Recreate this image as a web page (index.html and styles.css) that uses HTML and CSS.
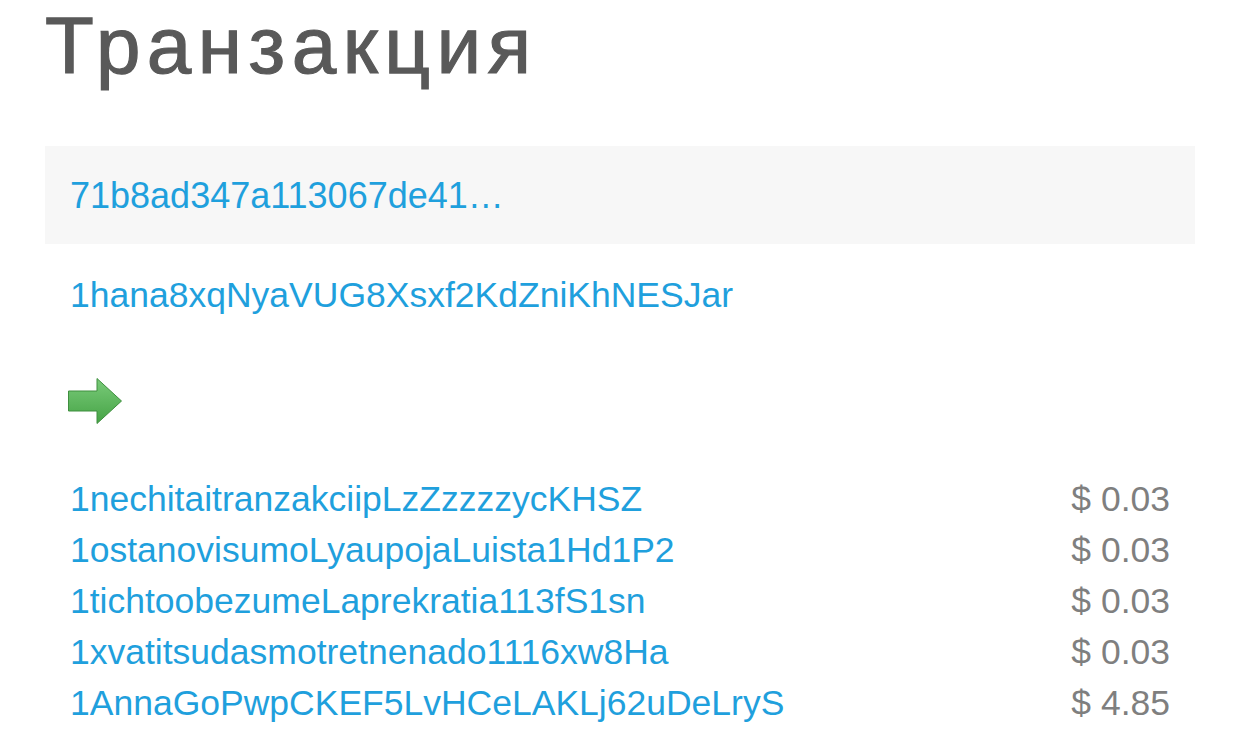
FILE: index.html
```html
<!DOCTYPE html>
<html lang="ru">
<head>
    <meta charset="UTF-8">
    <title>Транзакция</title>
    <link rel="stylesheet" href="styles.css">
</head>
<body>
<div id="main">
    <h1 class="title">Транзакция</h1>

    <div class="tx-hash">
        <a href="#">71b8ad347a113067de41…</a>
    </div>

    <div class="tx-from">
        <a href="#">1hana8xqNyaVUG8Xsxf2KdZniKhNESJar</a>
    </div>

    <div class="tx-arrow">
        <svg width="54" height="46" viewBox="0 0 54 46">
            <defs>
                <linearGradient id="arrowFill" x1="0" y1="0" x2="0" y2="1">
                    <stop offset="0" stop-color="#7acb7a"/>
                    <stop offset="1" stop-color="#45a345"/>
                </linearGradient>
            </defs>
            <path d="M0.5 13 H29 V0.5 L53.5 23 L29 45.5 V33 H0.5 Z" fill="url(#arrowFill)" stroke="#3f8f3f" stroke-width="1" stroke-linejoin="miter"/>
        </svg>
    </div>

    <ul class="tx-outputs">
        <li><a href="#">1nechitaitranzakciipLzZzzzzycKHSZ</a><span class="amount">$ 0.03</span></li>
        <li><a href="#">1ostanovisumoLyaupojaLuista1Hd1P2</a><span class="amount">$ 0.03</span></li>
        <li><a href="#">1tichtoobezumeLaprekratia113fS1sn</a><span class="amount">$ 0.03</span></li>
        <li><a href="#">1xvatitsudasmotretnenado1116xw8Ha</a><span class="amount">$ 0.03</span></li>
        <li><a href="#">1AnnaGoPwpCKEF5LvHCeLAKLj62uDeLryS</a><span class="amount">$ 4.85</span></li>
    </ul>
</div>
</body>
</html>
```

FILE: styles.css
```css
body {
    margin: 0;
    background: #fff;
    font-family: "Liberation Sans", Arial, sans-serif;
}

a {
    color: #1fa0dd;
    text-decoration: none;
}

#main {
    width: 1150px;
    margin-left: 45px;
}

.title {
    margin: 0;
    font-size: 80px;
    line-height: normal;
    font-weight: normal;
    letter-spacing: 6.5px;
    color: #595959;
    -webkit-text-stroke: 1.2px #595959;
}

.tx-hash {
    margin-top: 54px;
    padding: 25px 25px 23px;
    background: #f7f7f7;
    font-size: 36px;
    line-height: 50px;
}

.tx-from {
    padding: 26px 25px 0;
    font-size: 35.5px;
    line-height: 50px;
}

.tx-arrow {
    margin-top: 58px;
    padding-left: 23px;
    height: 46px;
}

.tx-arrow svg {
    display: block;
}

.tx-outputs {
    list-style: none;
    margin: 50px 0 0;
    padding: 0 25px;
    font-size: 35.5px;
    line-height: 51px;
}

.tx-outputs li {
    display: flex;
    justify-content: space-between;
}

.amount {
    color: #7f7f7f;
}
```
